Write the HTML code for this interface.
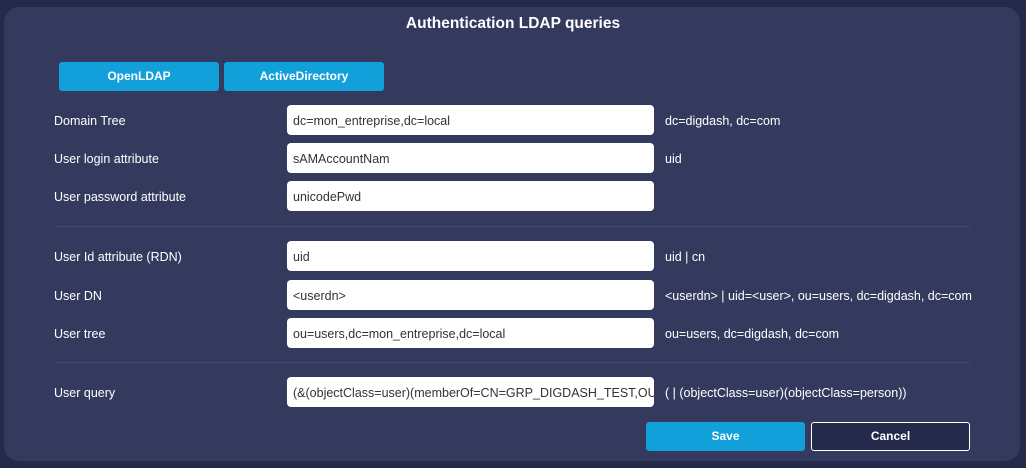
<!DOCTYPE html><html><head><style>
body{margin:0;width:1026px;height:468px;background:#252a4a;font-family:"Liberation Sans",sans-serif;overflow:hidden;position:relative}
.p{position:absolute;left:4px;top:7px;width:1016px;height:454px;background:#343a5e;border-radius:15px}
.t{position:absolute;left:0;width:1026px;top:15px;text-align:center;color:#fff;font-size:15.5px;font-weight:bold}
.b{position:absolute;height:29px;background:#12a0da;border-radius:3px;color:#fff;font-size:12px;font-weight:bold;text-align:center;line-height:29px}
.l{position:absolute;left:54px;color:#fff;font-size:12.5px;margin-top:1px}
.i{position:absolute;left:287px;width:361px;height:30px;padding-left:6px;background:#fff;border-radius:4px;color:#333;font-size:12.5px;line-height:32px;white-space:nowrap;overflow:hidden}
.r{position:absolute;left:665px;color:#fff;font-size:12.5px;white-space:nowrap;margin-top:1px}
.s{position:absolute;left:54px;width:916px;height:1px;background:#444b70}
</style></head><body>
<div class="p"></div>
<div class="t">Authentication LDAP queries</div>
<div class="b" style="left:59px;top:62px;width:160px">OpenLDAP</div>
<div class="b" style="left:224px;top:62px;width:160px">ActiveDirectory</div>
<div class="l" style="top:113px">Domain Tree</div><div class="i" style="top:105px">dc=mon_entreprise,dc=local</div><div class="r" style="top:113px">dc=digdash, dc=com</div>
<div class="l" style="top:151px">User login attribute</div><div class="i" style="top:143px">sAMAccountNam</div><div class="r" style="top:151px">uid</div>
<div class="l" style="top:189px">User password attribute</div><div class="i" style="top:181px">unicodePwd</div>
<div class="s" style="top:226px"></div>
<div class="l" style="top:249px">User Id attribute (RDN)</div><div class="i" style="top:241px">uid</div><div class="r" style="top:249px">uid | cn</div>
<div class="l" style="top:288px">User DN</div><div class="i" style="top:280px">&lt;userdn&gt;</div><div class="r" style="top:288px">&lt;userdn&gt; | uid=&lt;user&gt;, ou=users, dc=digdash, dc=com</div>
<div class="l" style="top:326px">User tree</div><div class="i" style="top:318px">ou=users,dc=mon_entreprise,dc=local</div><div class="r" style="top:326px">ou=users, dc=digdash, dc=com</div>
<div class="s" style="top:362px"></div>
<div class="l" style="top:385px">User query</div><div class="i" style="top:377px">(&amp;(objectClass=user)(memberOf=CN=GRP_DIGDASH_TEST,OU=G</div><div class="r" style="top:385px">( | (objectClass=user)(objectClass=person))</div>
<div class="b" style="left:646px;top:422px;width:159px">Save</div>
<div class="b" style="left:811px;top:422px;width:157px;height:27px;line-height:27px;background:#252a4a;border:1px solid #fff">Cancel</div>
</body></html>
